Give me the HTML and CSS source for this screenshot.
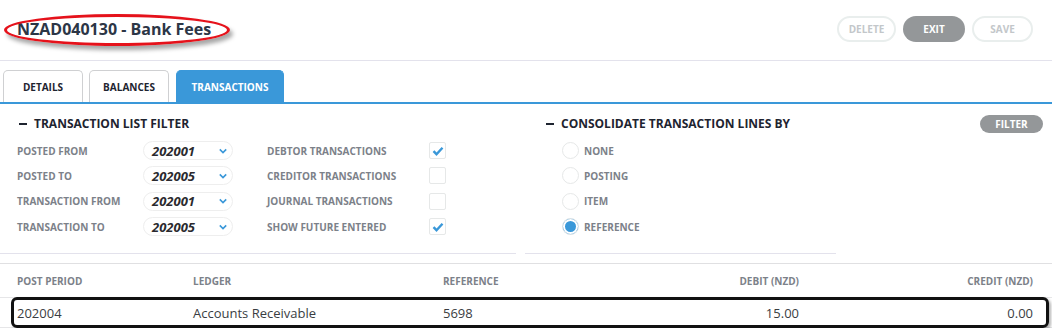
FILE: index.html
```html
<!DOCTYPE html>
<html lang="en">

<head>
    <meta charset="UTF-8">
    <meta name="viewport" content="width=device-width, initial-scale=1.0">
    <title>NZAD040130 - Bank Fees</title>
    <link rel="stylesheet" href="styles.css">
</head>

<body>

    <header class="page-header">
        <h1 class="page-title">NZAD040130 - Bank Fees</h1>
        <div class="actions">
            <button class="btn btn-outline">DELETE</button>
            <button class="btn btn-solid">EXIT</button>
            <button class="btn btn-outline">SAVE</button>
        </div>
    </header>

    <nav class="tabs">
        <div class="tab">DETAILS</div>
        <div class="tab">BALANCES</div>
        <div class="tab tab-active">TRANSACTIONS</div>
    </nav>

    <section class="filters">

        <article class="panel panel-list">
            <h2 class="panel-title"><span class="dash"></span>TRANSACTION LIST FILTER</h2>
            <div class="filter-grid">
                <span class="label">POSTED FROM</span>
                <div class="select">202001<svg class="chevron" viewBox="0 0 10 6"><path d="M1 1l4 4 4-4" /></svg></div>
                <span class="label">DEBTOR TRANSACTIONS</span>
                <span class="checkbox checked"><svg viewBox="0 0 12 10"><path d="M1.5 5.2l3 3 6-6.5" /></svg></span>

                <span class="label">POSTED TO</span>
                <div class="select">202005<svg class="chevron" viewBox="0 0 10 6"><path d="M1 1l4 4 4-4" /></svg></div>
                <span class="label">CREDITOR TRANSACTIONS</span>
                <span class="checkbox"></span>

                <span class="label">TRANSACTION FROM</span>
                <div class="select">202001<svg class="chevron" viewBox="0 0 10 6"><path d="M1 1l4 4 4-4" /></svg></div>
                <span class="label">JOURNAL TRANSACTIONS</span>
                <span class="checkbox"></span>

                <span class="label">TRANSACTION TO</span>
                <div class="select">202005<svg class="chevron" viewBox="0 0 10 6"><path d="M1 1l4 4 4-4" /></svg></div>
                <span class="label">SHOW FUTURE ENTERED</span>
                <span class="checkbox checked"><svg viewBox="0 0 12 10"><path d="M1.5 5.2l3 3 6-6.5" /></svg></span>
            </div>
        </article>

        <article class="panel panel-consolidate">
            <h2 class="panel-title"><span class="dash"></span>CONSOLIDATE TRANSACTION LINES BY</h2>
            <div class="radio-list">
                <div class="radio-row"><span class="radio"></span><span class="label">NONE</span></div>
                <div class="radio-row"><span class="radio"></span><span class="label">POSTING</span></div>
                <div class="radio-row"><span class="radio"></span><span class="label">ITEM</span></div>
                <div class="radio-row"><span class="radio selected"></span><span class="label">REFERENCE</span></div>
            </div>
        </article>

        <button class="btn btn-solid btn-filter">FILTER</button>

    </section>

    <section class="transactions">
        <div class="row row-head">
            <span>POST PERIOD</span>
            <span>LEDGER</span>
            <span>REFERENCE</span>
            <span class="num">DEBIT (NZD)</span>
            <span class="num">CREDIT (NZD)</span>
        </div>
        <div class="row row-data">
            <span>202004</span>
            <span>Accounts Receivable</span>
            <span>5698</span>
            <span class="num">15.00</span>
            <span class="num">0.00</span>
        </div>
    </section>

</body>

</html>
```

FILE: styles.css
```css
/*      Variables       */
:root {
    --text-dark: #2c3646;
    --text-label: #7c8189;
    --blue: #3a98d9;
    --grey-btn: #949799;
    --line: #e3e2ec;
    --box-border: #e6e8e8;
}

/*      Reset Styles    */
html {
    box-sizing: border-box;
    font-family: "Open Sans", sans-serif;
}

body {
    margin: 0;
    overflow: hidden;
    background: #fff;
    color: var(--text-dark);
}

*,
*::before,
*::after {
    box-sizing: inherit;
}

/*      Header          */
.page-header {
    height: 61px;
    display: flex;
    justify-content: space-between;
    align-items: center;
    padding: 0 19px 0 17px;
    border-bottom: 1px solid var(--line);
}

.page-title {
    position: relative;
    margin: 0 0 3px;
    font-size: 16px;
    font-weight: 700;
    line-height: 22px;
    color: var(--text-dark);
}

/* red annotation ring */
.page-title::before {
    content: "";
    position: absolute;
    left: -13px;
    right: -19px;
    top: -4px;
    bottom: -6px;
    border: 3px solid #e5121b;
    border-radius: 50%;
    box-shadow: 3px 4px 4px rgba(0, 0, 0, .35);
}

.actions {
    display: flex;
    gap: 7px;
    margin-top: -2px;
}

.btn {
    font-family: inherit;
    font-size: 10px;
    font-weight: 700;
    height: 26px;
    border-radius: 13px;
    padding: 0;
    cursor: pointer;
}

.btn-outline {
    width: 59px;
    background: #fff;
    color: #c3c7ca;
    border: 2px solid #e9eeed;
}

.btn-outline:last-child {
    width: 61px;
}

.btn-solid {
    width: 62px;
    background: var(--grey-btn);
    color: #fff;
    border: none;
}

/*      Tabs            */
.tabs {
    display: flex;
    gap: 6px;
    padding-left: 3px;
    margin-top: 9px;
    border-bottom: 2px solid var(--blue);
}

.tab {
    height: 32px;
    display: grid;
    place-content: center;
    font-size: 10px;
    font-weight: 700;
    color: #1e2430;
    border: 1px solid #cfd0d2;
    border-bottom: none;
    border-radius: 5px 5px 0 0;
    width: 80px;
}

.tab-active {
    width: 108px;
    background: var(--blue);
    border-color: var(--blue);
    color: #fff;
    margin-left: 1px;
}

/*      Filters         */
.filters {
    display: flex;
    align-items: flex-start;
    padding-top: 12px;
    border-bottom: 1px solid #e0e0e2;
}

.panel {
    padding-bottom: 14px;
    border-bottom: 1px solid var(--line);
    margin-bottom: 9px;
}

.panel-list {
    width: 516px;
    padding-left: 17px;
}

.panel-consolidate {
    width: 311px;
    margin-left: 9px;
    padding-left: 19px;
}

.panel-title {
    margin: 0 0 6px 2px;
    font-size: 12px;
    font-weight: 700;
    line-height: 16px;
    color: #1e2430;
    display: flex;
    align-items: center;
}

.dash {
    width: 8px;
    height: 2px;
    background: #1e2430;
    margin-right: 7px;
}

.label {
    font-size: 10px;
    font-weight: 700;
    color: var(--text-label);
    white-space: nowrap;
}

.filter-grid {
    display: grid;
    grid-template-columns: 126px 90px 196px 17px;
    grid-auto-rows: 25.3px;
    align-items: center;
}

.filter-grid .label:nth-child(4n + 3) {
    padding-left: 34px;
}

.select {
    height: 19px;
    border: 1px solid #eeeeee;
    border-radius: 10px;
    display: flex;
    align-items: center;
    justify-content: space-between;
    padding: 0 5px 0 8px;
    font-size: 13px;
    font-weight: 700;
    font-style: italic;
    color: #2a2a2e;
}

.chevron {
    width: 8px;
    height: 6px;
    fill: none;
    stroke: var(--blue);
    stroke-width: 2;
}

.checkbox {
    width: 17px;
    height: 17px;
    border: 1px solid var(--box-border);
    border-radius: 2px;
    display: grid;
    place-content: center;
}

.checkbox svg {
    width: 12px;
    height: 10px;
    fill: none;
    stroke: var(--blue);
    stroke-width: 2.4;
}

.radio-list {
    padding-left: 18px;
}

.radio-row {
    height: 25.3px;
    display: flex;
    align-items: center;
    gap: 5px;
}

.radio {
    width: 17px;
    height: 17px;
    border-radius: 50%;
    border: 1px solid var(--box-border);
}

.radio.selected {
    background: var(--blue);
    box-shadow: inset 0 0 0 2px #fff;
}

.btn-filter {
    height: 18px;
    width: 63px;
    border-radius: 9px;
    margin: -1px 9px 0 auto;
    font-size: 10px;
}

/*      Table           */
.row {
    display: grid;
    grid-template-columns: 176px 250px 156px 200px 234px;
    padding: 0 19px 0 17px;
    align-items: center;
}

.row-head {
    height: 34px;
    font-size: 10px;
    font-weight: 700;
    color: var(--text-label);
    border-bottom: 1px solid #e6e6e8;
}

.row-data {
    position: relative;
    height: 30px;
    font-size: 13px;
    color: #3a3d42;
    border-bottom: 1px solid #e6e6e8;
}

/* black annotation box */
.row-data::after {
    content: "";
    position: absolute;
    left: 11px;
    right: 3px;
    top: -1px;
    bottom: -1px;
    border: 3px solid #111;
    border-radius: 6px;
    box-shadow: 2px 2px 3px rgba(0, 0, 0, .3);
}

.num {
    text-align: right;
}
```
